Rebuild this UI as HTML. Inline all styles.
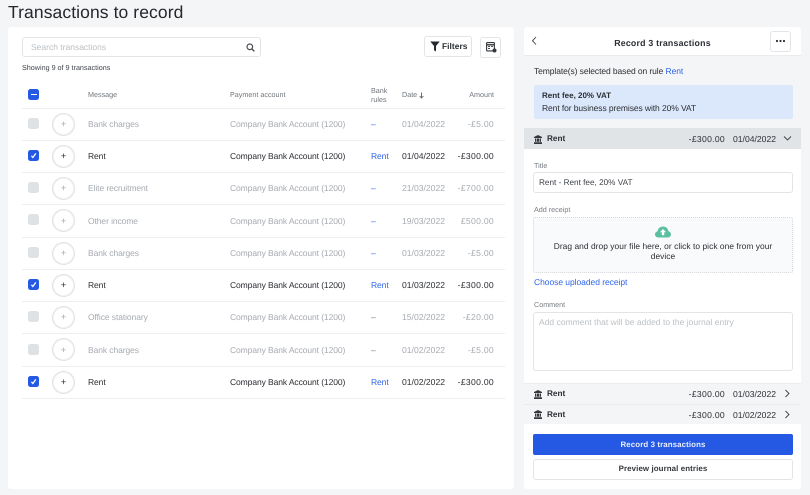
<!DOCTYPE html>
<html><head><meta charset="utf-8">
<style>
html,body{margin:0;padding:0;width:810px;height:495px;overflow:hidden;background:#f4f5f7;font-family:"Liberation Sans",sans-serif;color:#2b2e33;text-rendering:geometricPrecision}
div,span,svg{position:absolute;box-sizing:border-box}
.t{white-space:nowrap;font-size:8.5px;line-height:12px;letter-spacing:-.09px}
.n{font-size:8.6px;letter-spacing:0}
.a{font-size:8.6px;letter-spacing:.3px}
.r{text-align:right}
.c{text-align:center}
.g{color:#a7abb1}
.h{color:#70757c;font-size:7.2px;line-height:10px;letter-spacing:0}
.b{color:#2f66ea}
.l{left:22px;width:483px;height:1px;background:#eceef0}
.cb{left:28px;width:11px;height:11px;border-radius:2.5px;background:#dfe2e5}
.on{background:#2559e4}
.pl{left:52px;width:23px;height:23px;border-radius:50%;background:#fff;border:1px solid #dfe2e6;box-shadow:inset 0 0 0 1px #f3f4f6}
.p{left:52px;width:23px;font-size:9.5px;letter-spacing:0;text-align:center;margin-top:1px}
.lab{font-size:7.2px;color:#777c83;line-height:10px;letter-spacing:0}
.bd{border:1px solid #e2e4e7;border-radius:3px;background:#fff}
.m{font-weight:bold}
</style></head><body>
<div class="t" style="left:8px;top:1px;font-size:17.5px;line-height:22px;letter-spacing:.09px;color:#24272b">Transactions to record</div>

<div style="left:8px;top:27px;width:506px;height:462px;background:#fff;border-radius:3px"></div>
<div class="bd" style="left:22px;top:37px;width:239px;height:20px"></div>
<div class="t" style="left:31px;top:41px;color:#bcc0c5;letter-spacing:0">Search transactions</div>
<svg style="left:246px;top:43px" width="9" height="9" viewBox="0 0 9 9"><circle cx="3.8" cy="3.8" r="2.8" fill="none" stroke="#4b5057" stroke-width="1.2"/><path d="M6 6L8.4 8.4" stroke="#4b5057" stroke-width="1.4"/></svg>
<div class="t" style="left:22px;top:62px;font-size:7.2px;color:#3f4349;letter-spacing:0">Showing 9 of 9 transactions</div>

<div class="bd" style="left:424px;top:36px;width:48px;height:21px"></div>
<svg style="left:430px;top:41px" width="10" height="11" viewBox="0 0 10 11"><path d="M.3 .5H9.7L6 5V10.5L4 9.2V5Z" fill="#26292e"/></svg>
<div class="t m" style="left:442px;top:40px;font-size:8.4px;letter-spacing:.05px">Filters</div>
<div class="bd" style="left:480px;top:37px;width:21px;height:21px"></div>
<svg style="left:486px;top:42px" width="11" height="11" viewBox="0 0 11 11"><rect x=".6" y=".6" width="7.8" height="8.3" rx=".8" fill="none" stroke="#33373c" stroke-width="1.1"/><path d="M.6 2.8H8.4" stroke="#33373c" stroke-width="1.4"/><path d="M2 4.6H4M2 6.6H4M5 4.6H7" stroke="#33373c" stroke-width=".9"/><circle cx="8.5" cy="8.5" r="2" fill="#33373c"/></svg>

<div class="cb on" style="top:89px"></div><div style="left:30.5px;top:94px;width:6px;height:1.4px;background:#fff"></div>
<div class="t h" style="left:88px;top:90px">Message</div>
<div class="t h" style="left:230px;top:90px">Payment account</div>
<div class="t h" style="left:371px;top:86px">Bank</div><div class="t h" style="left:371px;top:94.5px">rules</div>
<div class="t h" style="left:402px;top:90px">Date</div>
<svg style="left:419px;top:91.5px" width="5" height="7" viewBox="0 0 5 7"><path d="M2.5 .5V6M.6 4L2.5 6L4.4 4" fill="none" stroke="#5d6269" stroke-width=".9"/></svg>
<div class="t h r" style="left:434px;top:90px;width:60px">Amount</div>
<div class="l" style="top:108px"></div>

<!-- row 1 -->
<div class="cb" style="top:118px"></div><div class="pl" style="top:113px"></div><div class="t p g" style="top:118px">+</div>
<div class="t g" style="left:88px;top:118px">Bank charges</div><div class="t g" style="left:230px;top:118px">Company Bank Account (1200)</div><div class="t b" style="left:371px;top:118px">–</div><div class="t n g" style="left:402px;top:118px">01/04/2022</div><div class="t a g r" style="left:434px;width:60px;top:118px">-£5.00</div>
<div class="l" style="top:140px"></div>
<!-- row 2 -->
<div class="cb on" style="top:150px"></div><svg style="left:28px;top:150px" width="11" height="11" viewBox="0 0 11 11"><path d="M3.4 5.8L4.9 7.5L7.8 3.4" fill="none" stroke="#fff" stroke-width="1.3"/></svg><div class="pl" style="top:145px"></div><div class="t p" style="top:150px">+</div>
<div class="t" style="left:88px;top:150px">Rent</div><div class="t" style="left:230px;top:150px">Company Bank Account (1200)</div><div class="t b" style="left:371px;top:150px">Rent</div><div class="t n" style="left:402px;top:150px">01/04/2022</div><div class="t a r" style="left:434px;width:60px;top:150px">-£300.00</div>
<div class="l" style="top:172px"></div>
<!-- row 3 -->
<div class="cb" style="top:182px"></div><div class="pl" style="top:177px"></div><div class="t p g" style="top:182px">+</div>
<div class="t g" style="left:88px;top:182px">Elite recruitment</div><div class="t g" style="left:230px;top:182px">Company Bank Account (1200)</div><div class="t b" style="left:371px;top:182px">–</div><div class="t n g" style="left:402px;top:182px">21/03/2022</div><div class="t a g r" style="left:434px;width:60px;top:182px">-£700.00</div>
<div class="l" style="top:204px"></div>
<!-- row 4 -->
<div class="cb" style="top:214px"></div><div class="pl" style="top:209px"></div><div class="t p g" style="top:214.5px">+</div>
<div class="t g" style="left:88px;top:214.5px">Other income</div><div class="t g" style="left:230px;top:214.5px">Company Bank Account (1200)</div><div class="t b" style="left:371px;top:214.5px">–</div><div class="t n g" style="left:402px;top:214.5px">19/03/2022</div><div class="t a g r" style="left:434px;width:60px;top:214.5px">£500.00</div>
<div class="l" style="top:237px"></div>
<!-- row 5 -->
<div class="cb" style="top:247px"></div><div class="pl" style="top:242px"></div><div class="t p g" style="top:247px">+</div>
<div class="t g" style="left:88px;top:247px">Bank charges</div><div class="t g" style="left:230px;top:247px">Company Bank Account (1200)</div><div class="t b" style="left:371px;top:247px">–</div><div class="t n g" style="left:402px;top:247px">01/03/2022</div><div class="t a g r" style="left:434px;width:60px;top:247px">-£5.00</div>
<div class="l" style="top:269px"></div>
<!-- row 6 -->
<div class="cb on" style="top:279px"></div><svg style="left:28px;top:279px" width="11" height="11" viewBox="0 0 11 11"><path d="M3.4 5.8L4.9 7.5L7.8 3.4" fill="none" stroke="#fff" stroke-width="1.3"/></svg><div class="pl" style="top:274px"></div><div class="t p" style="top:279px">+</div>
<div class="t" style="left:88px;top:279px">Rent</div><div class="t" style="left:230px;top:279px">Company Bank Account (1200)</div><div class="t b" style="left:371px;top:279px">Rent</div><div class="t n" style="left:402px;top:279px">01/03/2022</div><div class="t a r" style="left:434px;width:60px;top:279px">-£300.00</div>
<div class="l" style="top:301px"></div>
<!-- row 7 -->
<div class="cb" style="top:311px"></div><div class="pl" style="top:306px"></div><div class="t p g" style="top:311px">+</div>
<div class="t g" style="left:88px;top:311px">Office stationary</div><div class="t g" style="left:230px;top:311px">Company Bank Account (1200)</div><div class="t" style="left:371px;top:311px;color:#70757c">–</div><div class="t n g" style="left:402px;top:311px">15/02/2022</div><div class="t a g r" style="left:434px;width:60px;top:311px">-£20.00</div>
<div class="l" style="top:333px"></div>
<!-- row 8 -->
<div class="cb" style="top:344px"></div><div class="pl" style="top:338px"></div><div class="t p g" style="top:343.5px">+</div>
<div class="t g" style="left:88px;top:343.5px">Bank charges</div><div class="t g" style="left:230px;top:343.5px">Company Bank Account (1200)</div><div class="t" style="left:371px;top:343.5px;color:#70757c">–</div><div class="t n g" style="left:402px;top:343.5px">01/02/2022</div><div class="t a g r" style="left:434px;width:60px;top:343.5px">-£5.00</div>
<div class="l" style="top:366px"></div>
<!-- row 9 -->
<div class="cb on" style="top:376px"></div><svg style="left:28px;top:376px" width="11" height="11" viewBox="0 0 11 11"><path d="M3.4 5.8L4.9 7.5L7.8 3.4" fill="none" stroke="#fff" stroke-width="1.3"/></svg><div class="pl" style="top:371px"></div><div class="t p" style="top:375.5px">+</div>
<div class="t" style="left:88px;top:375.5px">Rent</div><div class="t" style="left:230px;top:375.5px">Company Bank Account (1200)</div><div class="t b" style="left:371px;top:375.5px">Rent</div><div class="t n" style="left:402px;top:375.5px">01/02/2022</div><div class="t a r" style="left:434px;width:60px;top:375.5px">-£300.00</div>
<div class="l" style="top:398px"></div>

<!-- right card -->
<div style="left:524px;top:27px;width:277px;height:462px;background:#fff;border-radius:3px"></div>
<div style="left:524px;top:55px;width:277px;height:73px;background:#f4f5f7;border-top:1px solid #e9ebee"></div>
<svg style="left:531px;top:36px" width="7" height="10" viewBox="0 0 7 10"><path d="M5 1L1.5 4.8L5 8.5" fill="none" stroke="#3a3e44" stroke-width=".9"/></svg>
<div class="t c m" style="left:524px;width:277px;top:36.5px;font-size:8.8px;letter-spacing:.2px">Record 3 transactions</div>
<div class="bd" style="left:770px;top:31px;width:21px;height:21px"></div>
<svg style="left:775px;top:39px" width="11" height="4" viewBox="0 0 11 4"><circle cx="2" cy="2" r="1.1" fill="#2b2e33"/><circle cx="5.5" cy="2" r="1.1" fill="#2b2e33"/><circle cx="9" cy="2" r="1.1" fill="#2b2e33"/></svg>
<div class="t" style="left:534px;top:64.5px">Template(s) selected based on rule <span class="b" style="position:static">Rent</span></div>
<div style="left:534px;top:85px;width:259px;height:34px;background:#dbe8fb;border-radius:2px"></div>
<div class="t m" style="left:542px;top:90px;font-size:8px;letter-spacing:0">Rent fee, 20% VAT</div>
<div class="t" style="left:542px;top:101.5px">Rent for business premises with 20% VAT</div>

<div style="left:524px;top:128px;width:277px;height:21px;background:#e1e4e7"></div>
<svg style="left:534px;top:134.5px" width="8" height="9" viewBox="0 0 8 9"><path d="M4 0L8 2V3H0V2ZM1 3.5H7V6.8H1ZM0 7.2H8V9H0Z" fill="#33373c"/><path d="M2.7 3.5V6.8M5.3 3.5V6.8" stroke="#e1e4e7" stroke-width=".6"/></svg>
<div class="t m" style="left:547px;top:132.5px;font-size:8.2px;letter-spacing:0">Rent</div>
<div class="t a r" style="left:664px;width:61px;top:132.5px">-£300.00</div>
<div class="t n" style="left:733px;top:132.5px">01/04/2022</div>
<svg style="left:783px;top:135px" width="9" height="7" viewBox="0 0 9 7"><path d="M1 1.5L4.5 5L8 1.5" fill="none" stroke="#3a3e44" stroke-width=".9"/></svg>

<div class="t lab" style="left:534px;top:161px">Title</div>
<div class="bd" style="left:533px;top:172px;width:260px;height:21px"></div>
<div class="t" style="left:539px;top:176.5px;color:#3f4349;font-size:8.2px;letter-spacing:0">Rent - Rent fee, 20% VAT</div>
<div class="t lab" style="left:534px;top:205px">Add receipt</div>
<div style="left:533px;top:217px;width:260px;height:56px;background:#f9fafc;border:1px dotted #d5d8dc;border-radius:2px"></div>
<svg style="left:655px;top:226px" width="16" height="12" viewBox="0 0 16 12"><path d="M3.5 11.5C1.4 11.5 0 10.2 0 8.3C0 6.7 1.2 5.5 2.6 5.2C3 2.4 5.2 .5 8 .5C10.8 .5 13 2.4 13.4 5.2C14.8 5.5 16 6.7 16 8.3C16 10.2 14.6 11.5 12.5 11.5Z" fill="#5cc0a0"/><path d="M8 3L11 6.3H9.2V9.2H6.8V6.3H5Z" fill="#fff"/></svg>
<div class="t c" style="left:533px;width:260px;top:241px;line-height:10px;white-space:normal;padding:0 10px;font-size:8.4px;letter-spacing:.05px">Drag and drop your file here, or click to pick one from your device</div>
<div class="t b" style="left:534px;top:276px;letter-spacing:-.05px">Choose uploaded receipt</div>
<div class="t lab" style="left:534px;top:300px">Comment</div>
<div class="bd" style="left:533px;top:312px;width:260px;height:59px"></div>
<div class="t" style="left:539px;top:316px;color:#bcc0c5;letter-spacing:.02px">Add comment that will be added to the journal entry</div>

<div style="left:524px;top:383px;width:277px;height:41px;background:#f4f5f7;border-top:1px solid #ebedef"></div>
<div style="left:524px;top:404px;width:277px;height:1px;background:#e9ebee"></div>
<svg style="left:534px;top:390px" width="8" height="9" viewBox="0 0 8 9"><path d="M4 0L8 2V3H0V2ZM1 3.5H7V6.8H1ZM0 7.2H8V9H0Z" fill="#33373c"/><path d="M2.7 3.5V6.8M5.3 3.5V6.8" stroke="#f4f5f7" stroke-width=".6"/></svg>
<div class="t m" style="left:547px;top:388px;font-size:8.2px;letter-spacing:0">Rent</div>
<div class="t a r" style="left:664px;width:61px;top:388px">-£300.00</div>
<div class="t n" style="left:733px;top:388px">01/03/2022</div>
<svg style="left:784px;top:389px" width="7" height="9" viewBox="0 0 7 9"><path d="M1.5 1L5 4.5L1.5 8" fill="none" stroke="#3a3e44" stroke-width=".9"/></svg>
<svg style="left:534px;top:410px" width="8" height="9" viewBox="0 0 8 9"><path d="M4 0L8 2V3H0V2ZM1 3.5H7V6.8H1ZM0 7.2H8V9H0Z" fill="#33373c"/><path d="M2.7 3.5V6.8M5.3 3.5V6.8" stroke="#f4f5f7" stroke-width=".6"/></svg>
<div class="t m" style="left:547px;top:408.5px;font-size:8.2px;letter-spacing:0">Rent</div>
<div class="t a r" style="left:664px;width:61px;top:408.5px">-£300.00</div>
<div class="t n" style="left:733px;top:408.5px">01/02/2022</div>
<svg style="left:784px;top:410px" width="7" height="9" viewBox="0 0 7 9"><path d="M1.5 1L5 4.5L1.5 8" fill="none" stroke="#3a3e44" stroke-width=".9"/></svg>

<div style="left:533px;top:434px;width:260px;height:21px;background:#2559e4;border-radius:2px"></div>
<div class="t c m" style="left:533px;width:260px;top:438.5px;color:#e8eefc;font-size:7.9px;letter-spacing:.1px">Record 3 transactions</div>
<div class="bd" style="left:533px;top:459px;width:260px;height:21px"></div>
<div class="t c m" style="left:533px;width:260px;top:463px;font-size:7.9px;letter-spacing:.1px;color:#33373c">Preview journal entries</div>
</body></html>
